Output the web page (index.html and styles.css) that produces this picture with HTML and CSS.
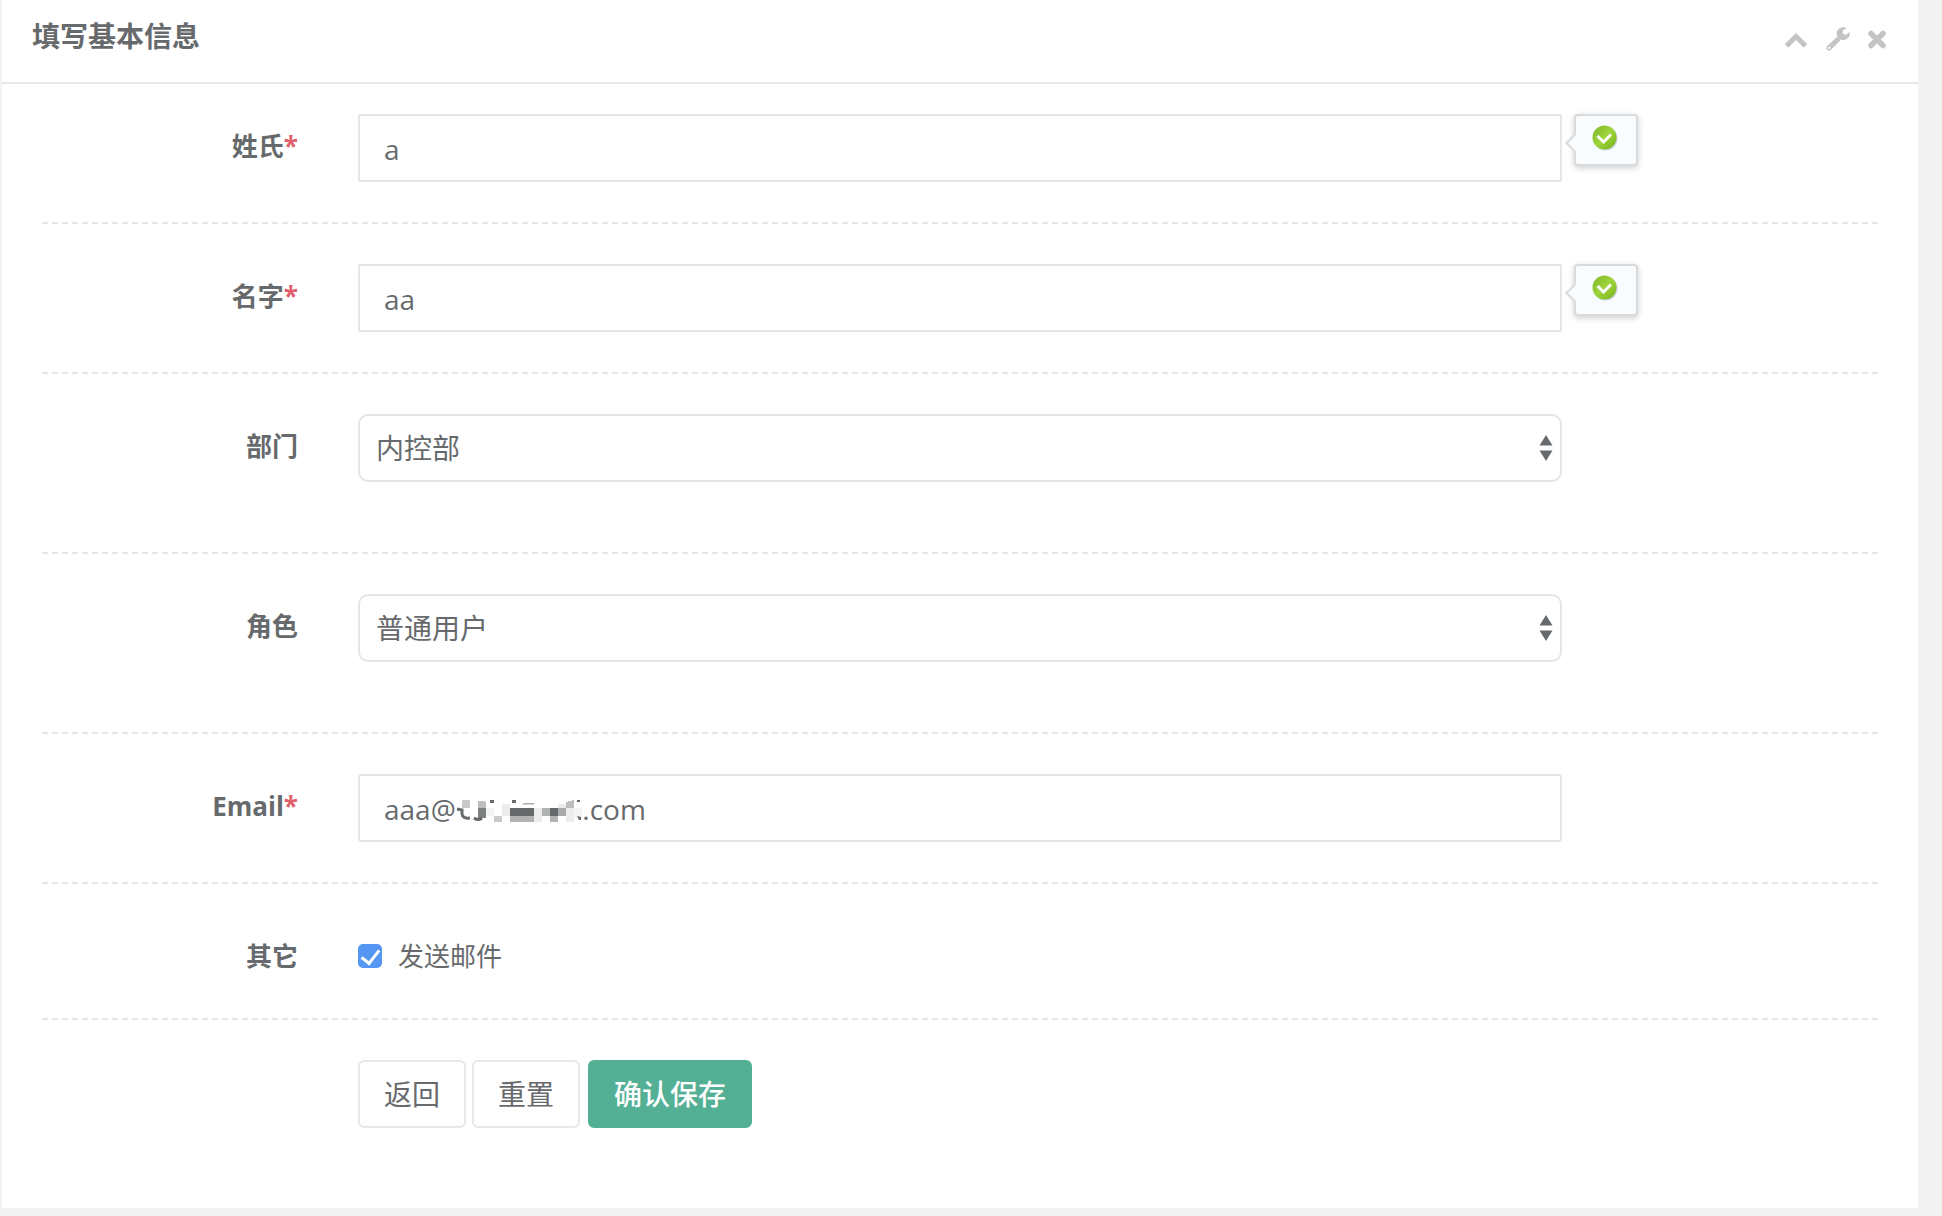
FILE: index.html
```html
<!DOCTYPE html>
<html lang="zh-CN">
<head>
<meta charset="utf-8">
<meta name="viewport" content="width=device-width, initial-scale=1">
<title>填写基本信息</title>
<link rel="stylesheet" href="styles.css">
</head>
<body>
<main class="panel">
  <header class="panel-head">
    <h1 class="panel-title">填写基本信息</h1>
    <div class="tools">
      <button class="tool" type="button" aria-label="收起"><svg width="24" height="24" viewBox="0 0 24 24"><path d="M2.500 19 12 9.500 21.500 19" fill="none" stroke="currentColor" stroke-width="5"/></svg></button>
      <button class="tool" type="button" aria-label="设置"><svg width="24" height="24" viewBox="0 0 24 24"><path fill="currentColor" fill-rule="evenodd" d="M11.200 9.800 14.600 13.200 5 22.700Q3.200 24.400 1.300 22.700Q-.6 20.800 1.200 19ZM3.300 19.600a1.200 1.200 0 1 0 .01 0ZM20.500 1.200 16.800 3.400V6.500L19.300 7.900 23.300 5.500Q24 5.300 24 6.200C23.600 10.500 20.500 13 17 13A6.400 6.400 0 0 1 17 .2Q19.200.1 20.500 1.200Z"/></svg></button>
      <button class="tool" type="button" aria-label="关闭"><svg width="18" height="24" viewBox="0 0 18 24"><path d="M3 6.500 15 18.500M15 6.500 3 18.500" fill="none" stroke="currentColor" stroke-width="5.500" stroke-linecap="round"/></svg></button>
    </div>
  </header>
  <form class="form">
    <div class="row">
      <label class="name" for="last">姓氏<span class="must">*</span></label>
      <div class="field">
        <input class="text" id="last" type="text" value="a">
        <span class="tip"><svg width="26" height="26" viewBox="0 0 26 26"><use href="#ok"/></svg></span>
      </div>
    </div>
    <div class="row">
      <label class="name" for="first">名字<span class="must">*</span></label>
      <div class="field">
        <input class="text" id="first" type="text" value="aa">
        <span class="tip"><svg width="26" height="26" viewBox="0 0 26 26"><use href="#ok"/></svg></span>
      </div>
    </div>
    <div class="row row-tall">
      <label class="name" for="dept">部门</label>
      <div class="field"><select class="pick" id="dept"><option>内控部</option></select><svg class="arrows" width="14" height="26" viewBox="0 0 14 26"><path fill="currentColor" d="M7 0 13.500 10.500H.5ZM.5 15.500H13.500L7 26Z"/></svg></div>
    </div>
    <div class="row row-tall">
      <label class="name" for="role">角色</label>
      <div class="field"><select class="pick" id="role"><option>普通用户</option></select><svg class="arrows" width="14" height="26" viewBox="0 0 14 26"><path fill="currentColor" d="M7 0 13.500 10.500H.5ZM.5 15.500H13.500L7 26Z"/></svg></div>
    </div>
    <div class="row">
      <label class="name" for="email">Email<span class="must">*</span></label>
      <div class="field">
        <input class="text" id="email" type="text" value="aaa@&emsp;&emsp;&emsp;&emsp;&nbsp;&nbsp;.com">
        <svg class="mosaic" width="130" height="24" viewBox="0 0 130 24">
          <g shape-rendering="crispEdges">
            <path fill="#f4f4f4" d="M30 8h8v8h-8ZM118 8h8v10h-8Z"/>
            <path fill="#c8c9c9" d="M6 0h8v8H6ZM38 16h8v6h-8Z"/>
            <path fill="#bcbdbe" d="M22 1h6l2 2v5h-8ZM110 2l8-2v8h-8Z"/>
            <path fill="#7d8081" d="M22 8h8v10h-8Z"/>
            <path fill="#66696a" d="M54 8h24v8H54ZM94 8h8v8h-8Z"/>
            <path fill="#b2b4b4" d="M54 16h24v6H54ZM86 8h8v8h-8ZM94 16h8v6h-8Z"/>
            <path fill="#ececec" d="M46 4h8v12h-8ZM78 8h8v14h-8ZM102 4h8v4h-8ZM110 8h8v14h-8Z"/>
            <path fill="#a8aaab" d="M102 8h8v8h-8Z"/>
          </g>
          <path fill="none" stroke="#676a6c" stroke-width="3" d="M1 9 6 10V14Q7 19 14 18M18 18Q22 21 26 18"/>
          <path fill="#676a6c" d="M34 0h4v3h-4ZM56 0h4v3h-4ZM121 0h3v2h-3ZM121 16l4 1v3h-2Z"/>
          <path fill="#aaacad" d="M68 3h10v1.500H66Z"/>
        </svg>
      </div>
    </div>
    <div class="row row-check">
      <span class="name">其它</span>
      <div class="field"><label class="check"><input type="checkbox" checked>发送邮件</label></div>
    </div>
    <div class="row">
      <span class="name"></span>
      <div class="field buttons">
        <button class="btn" type="button">返回</button>
        <button class="btn" type="reset">重置</button>
        <button class="btn btn-main" type="submit">确认保存</button>
      </div>
    </div>
  </form>
</main>
<svg class="defs" width="0" height="0" aria-hidden="true">
  <defs>
    <linearGradient id="green" x1="0" y1="0" x2="1" y2="1"><stop offset="0" stop-color="#7fb52a"/><stop offset=".5" stop-color="#9fd53c"/><stop offset="1" stop-color="#74b01c"/></linearGradient>
    <g id="ok"><circle cx="13.500" cy="13.500" r="12" fill="#ccd2df"/><circle cx="12.500" cy="12.500" r="12" fill="url(#green)"/><path d="M5.500 11 11.500 17 19 9.500" fill="none" stroke="#fff" stroke-width="3"/></g>
  </defs>
</svg>
</body>
</html>
```
FILE: styles.css
```css
* { box-sizing: border-box; }

body {
  margin: 0;
  padding: 0 24px 8px 2px;
  background: #f2f2f2;
  color: #676a6c;
  font-family: "Open Sans", "Noto Sans CJK SC", sans-serif;
  font-size: 26px;
  line-height: 36px;
}

button, input, select { font: inherit; color: inherit; }

.panel { background: #fff; }

.panel-head {
  display: flex;
  justify-content: space-between;
  height: 84px;
  padding: 18px 32px 0 30px;
  border-bottom: 2px solid #e7e7e7;
}

.panel-title { margin: 0; font-size: 28px; font-weight: 700; line-height: 36px; }

.tools { display: flex; align-items: flex-start; gap: 18px; padding-top: 9px; }
.tool { display: flex; padding: 0; border: 0; background: none; color: #c4c4c4; }

.form { padding: 30px 40px 40px; }

.row {
  display: grid;
  grid-template-columns: 2fr 8fr 2fr;
  margin: 0 -30px;
  padding-bottom: 40px;
  position: relative;
}

.row + .row { padding-top: 42px; }

.row + .row::before {
  content: "";
  position: absolute;
  top: 0;
  left: 30px;
  right: 30px;
  border-top: 2px dashed #e7e7e7;
}

.row.row-tall { padding-bottom: 70px; }

.name { padding: 14px 30px 0; text-align: right; font-weight: 700; }
.must { color: #e0606c; }
.field { position: relative; padding: 0 30px; }

.text, .pick {
  display: block;
  width: 100%;
  height: 68px;
  border: 2px solid #e5e6e7;
  background: #fff;
  font-size: 28px;
}

.text { padding: 2px 24px 0; border-radius: 2px; }
.pick { padding: 0 16px; border-radius: 10px; appearance: none; }

.arrows { position: absolute; top: 21px; right: 39px; pointer-events: none; }

.tip {
  position: absolute;
  top: 0;
  left: calc(100% - 18px);
  width: 64px;
  height: 52px;
  padding: 9px 16px;
  border: 2px solid #dadada;
  border-radius: 4px;
  background: #f9fcff;
  box-shadow: 0 2px 6px #0003;
}

.tip svg { display: block; }

.tip::before {
  content: "";
  position: absolute;
  top: 20px;
  left: -8px;
  width: 12px;
  height: 12px;
  border: solid #dadada;
  border-width: 0 0 2px 2px;
  background: #f9fcff;
  transform: rotate(45deg);
}

.mosaic { position: absolute; top: 26px; left: 128px; }

.row.row-check { padding-bottom: 44px; }
.row-check .field { padding-top: 14px; }
.check { display: flex; width: fit-content; align-items: center; gap: 16px; }

.check input {
  width: 24px;
  height: 24px;
  margin: 0;
  appearance: none;
  border-radius: 5px;
  background: #5596f3;
  display: grid;
  place-items: center;
}

.check input:checked::before {
  content: "";
  width: 8px;
  height: 15px;
  margin-bottom: 3px;
  border: solid #fff;
  border-width: 0 3px 3px 0;
  transform: rotate(38deg);
}

.buttons { display: flex; gap: 6px; }

.btn {
  height: 68px;
  padding: 0 24px;
  border: 2px solid #e7e7e7;
  border-radius: 6px;
  background: #fff;
  font-size: 28px;
}

.btn-main { margin-left: 2px; border-color: #54b095; background: #54b095; color: #fff; font-weight: 500; }

.defs { position: absolute; }
```
